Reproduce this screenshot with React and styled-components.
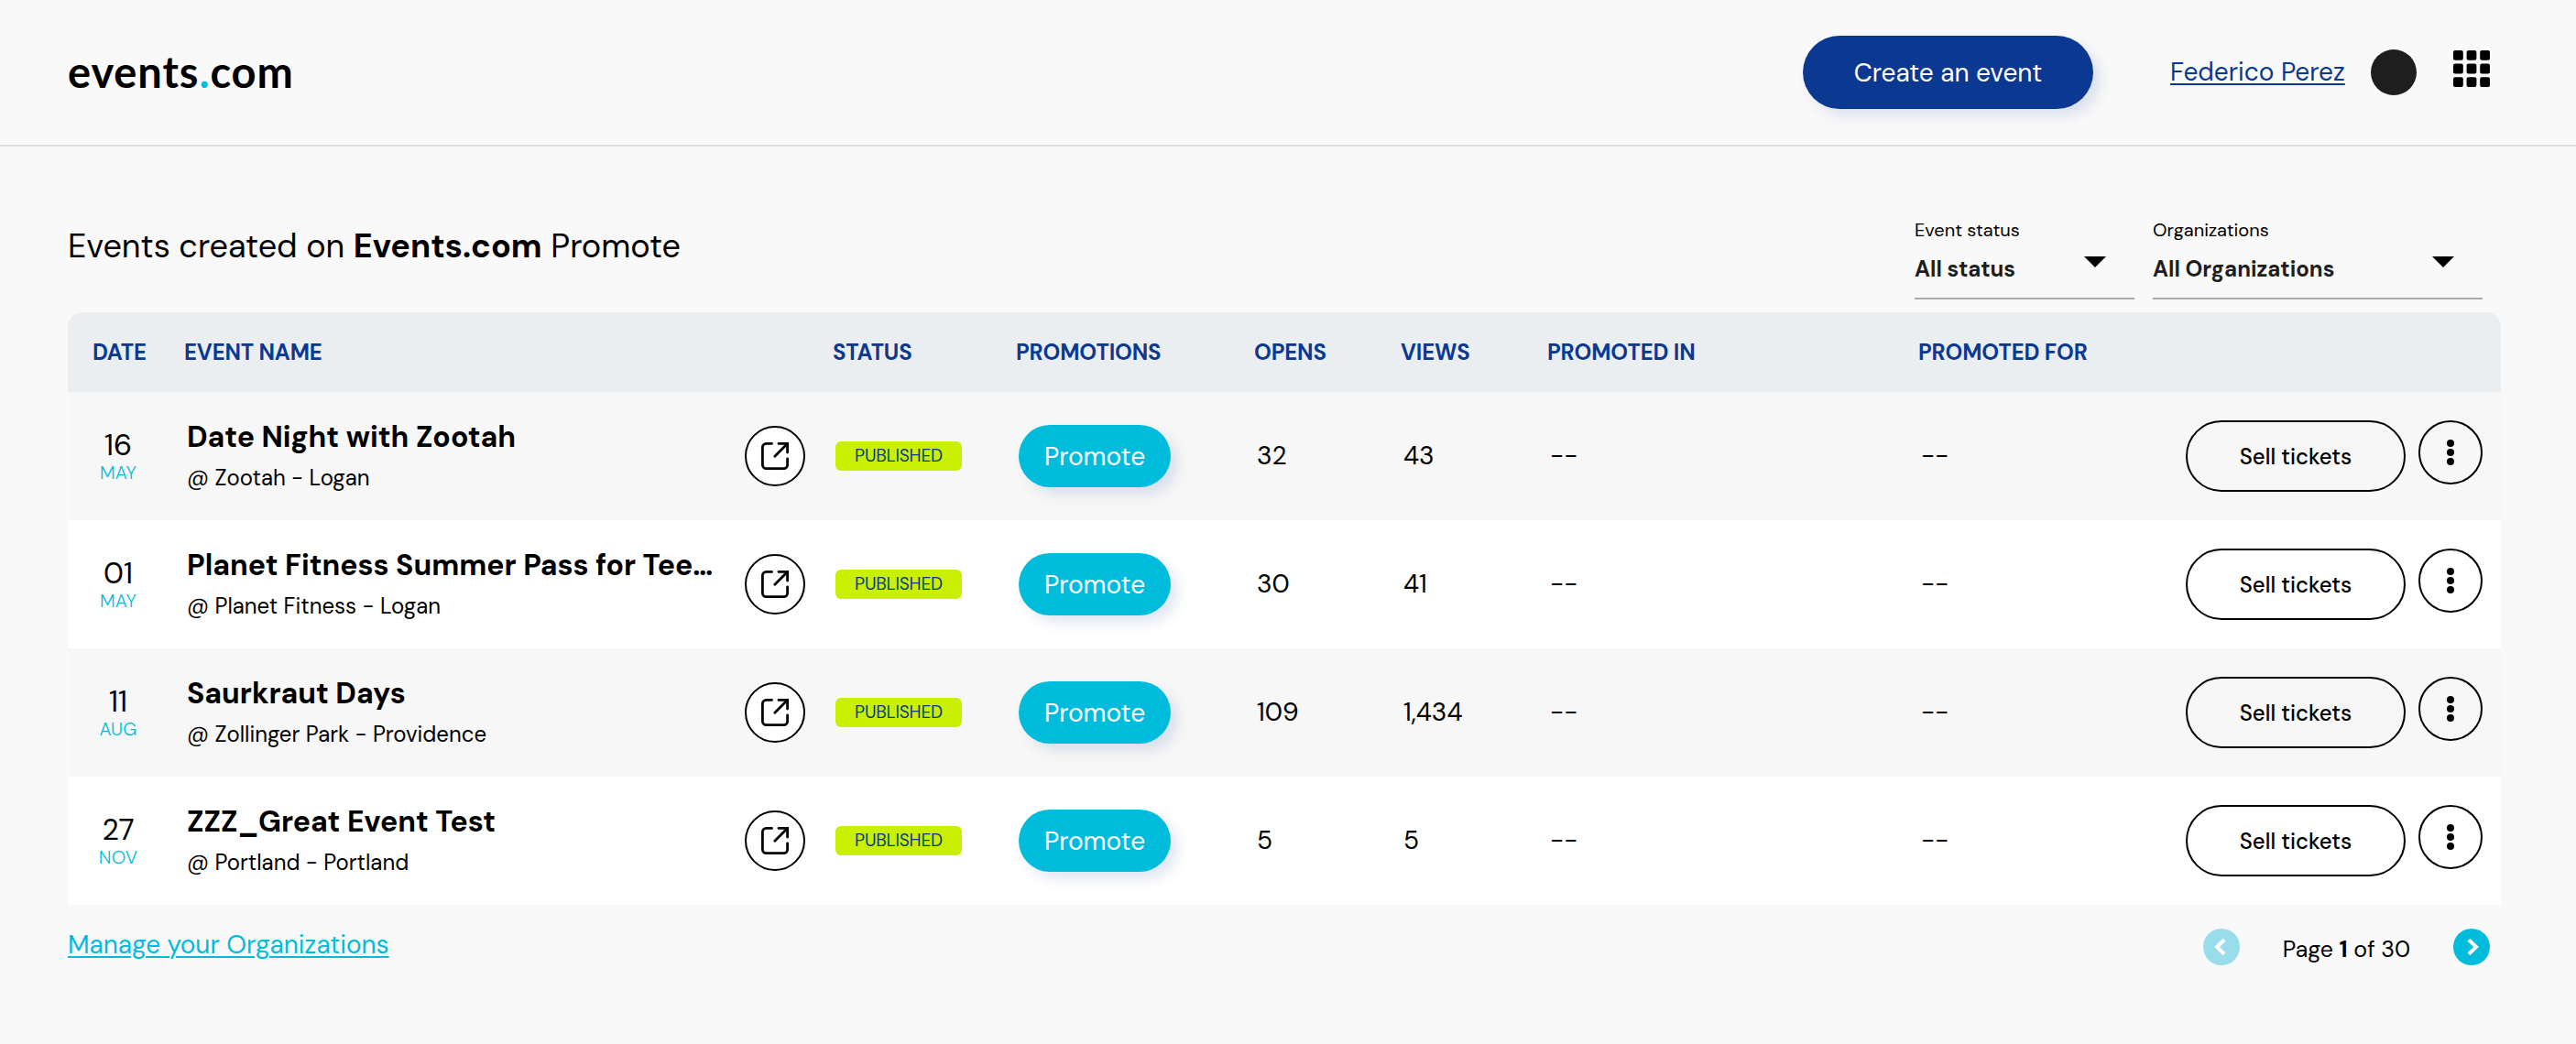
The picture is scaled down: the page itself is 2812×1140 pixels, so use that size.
import React from "react";
import styled, { createGlobalStyle } from "styled-components";

const events = [
  { id: 1, day: "16", month: "MAY", name: "Date Night with Zootah", place: "@ Zootah - Logan", opens: "32", views: "43" },
  { id: 2, day: "01", month: "MAY", name: "Planet Fitness Summer Pass for Tee…", place: "@ Planet Fitness - Logan", opens: "30", views: "41" },
  { id: 3, day: "11", month: "AUG", name: "Saurkraut Days", place: "@ Zollinger Park - Providence", opens: "109", views: "1,434" },
  { id: 4, day: "27", month: "NOV", name: "ZZZ_Great Event Test", place: "@ Portland - Portland", opens: "5", views: "5" },
];

function GridIcon() {
  const cells = [0, 14.6, 29.2];
  return (
    <svg width="40" height="40" viewBox="0 0 40 40">
      {cells.map((y) =>
        cells.map((x) => (
          <rect key={`${x}-${y}`} x={x} y={y} width="10.8" height="10.8" rx="2" fill="#000" />
        ))
      )}
    </svg>
  );
}

function OpenIcon() {
  return (
    <svg width="32" height="32" viewBox="0 0 32 32" fill="none" stroke="#000" strokeWidth="2.8" strokeLinecap="round">
      <path d="M12.5 2.4h-6a4.1 4.1 0 0 0-4.1 4.1v19a4.1 4.1 0 0 0 4.1 4.1h19a4.1 4.1 0 0 0 4.1-4.1V19" />
      <path d="M20 2.4h9.6V12" />
      <path d="M15.8 16.2 29 3" />
    </svg>
  );
}

function DotsIcon() {
  return (
    <svg width="8" height="28" viewBox="0 0 8 28">
      <circle cx="4" cy="4" r="4" />
      <circle cx="4" cy="14" r="4" />
      <circle cx="4" cy="24" r="4" />
    </svg>
  );
}

function Chevron({ left }) {
  return (
    <svg width="40" height="40" viewBox="0 0 40 40" fill="none" stroke="#fff" strokeWidth="4">
      <path d={left ? "M23 12.2 15 20l8 7.8" : "M17 12.2 25 20l-8 7.8"} />
    </svg>
  );
}

function Filter({ label, value, width }) {
  return (
    <FilterBox $width={width}>
      <FilterLabel>{label}</FilterLabel>
      <FilterValue>
        <span>{value}</span>
        <Arrow />
      </FilterValue>
    </FilterBox>
  );
}

function App() {
  return (
    <Page>
      <GlobalStyle />
      <Header>
        <Logo>
          events<span>.</span>com
        </Logo>
        <HeaderRight>
          <CreateButton>Create an event</CreateButton>
          <UserLink href="#">Federico Perez</UserLink>
          <Avatar />
          <AppsButton>
            <GridIcon />
          </AppsButton>
        </HeaderRight>
      </Header>
      <Content>
        <TopBar>
          <Title>
            Events created on <b>Events.com</b> Promote
          </Title>
          <Filters>
            <Filter label="Event status" value="All status" width={240} />
            <Filter label="Organizations" value="All Organizations" width={360} />
          </Filters>
        </TopBar>
        <TableHead>
          <span>DATE</span>
          <span>EVENT NAME</span>
          <span>STATUS</span>
          <span>PROMOTIONS</span>
          <span>OPENS</span>
          <span>VIEWS</span>
          <span>PROMOTED IN</span>
          <span>PROMOTED FOR</span>
        </TableHead>
        {events.map((event) => (
          <TableRow key={event.id}>
            <DateCell>
              <Day>{event.day}</Day>
              <Month>{event.month}</Month>
            </DateCell>
            <NameCell>
              <div>
                <EventName>{event.name}</EventName>
                <EventPlace>{event.place}</EventPlace>
              </div>
              <OpenButton>
                <OpenIcon />
              </OpenButton>
            </NameCell>
            <Cell>
              <Status>PUBLISHED</Status>
            </Cell>
            <Cell>
              <PromoteButton>Promote</PromoteButton>
            </Cell>
            <Cell>{event.opens}</Cell>
            <Cell>{event.views}</Cell>
            <Cell>--</Cell>
            <Cell>--</Cell>
            <Actions>
              <SellButton>Sell tickets</SellButton>
              <MoreButton>
                <DotsIcon />
              </MoreButton>
            </Actions>
          </TableRow>
        ))}
        <BottomBar>
          <ManageLink href="#">Manage your Organizations</ManageLink>
          <Pager>
            <PagerButton $disabled>
              <Chevron left />
            </PagerButton>
            <PagerText>
              Page <b>1</b> of 30
            </PagerText>
            <PagerButton>
              <Chevron />
            </PagerButton>
          </Pager>
        </BottomBar>
      </Content>
    </Page>
  );
}

export default App;

const GlobalStyle = createGlobalStyle`
  * {
    box-sizing: border-box;
  }
  body {
    margin: 0;
    background: #f9f9f9;
    color: #000;
    font-family: "DM Sans", Inter, "Liberation Sans", sans-serif;
  }
  button {
    padding: 0;
    border: none;
    background: none;
    font-family: inherit;
    color: inherit;
  }
  svg {
    display: block;
  }
`;

const Page = styled.div`
  min-height: 1140px;
`;

const Header = styled.header`
  display: flex;
  justify-content: space-between;
  align-items: center;
  height: 160px;
  padding: 0 94px 0 74px;
  border-bottom: 2px solid #dfdadc;
`;

const Logo = styled.div`
  font-family: Lato, "DM Sans", sans-serif;
  font-size: 47px;
  font-weight: 700;
  letter-spacing: 0.9px;
  line-height: 56px;
  margin-bottom: 3px;

  > span {
    color: #00bcdc;
  }
`;

const HeaderRight = styled.div`
  display: flex;
  align-items: center;
`;

const CreateButton = styled.button`
  width: 317px;
  height: 80px;
  border-radius: 40px;
  background: #0b3991;
  color: #fff;
  font-size: 28px;
  font-weight: 400;
  box-shadow: 8px 8px 14px rgba(11, 57, 145, 0.12);
`;

const UserLink = styled.a`
  width: 192px;
  margin-left: 84px;
  color: #0b3991;
  font-size: 28px;
  line-height: 34px;
  white-space: nowrap;
  text-underline-offset: 3px;
  text-decoration-thickness: 2px;
`;

const Avatar = styled.div`
  width: 50px;
  height: 50px;
  margin-left: 27px;
  border-radius: 50%;
  background: #1e1e1e;
`;

const AppsButton = styled.button`
  margin-left: 40px;
  margin-bottom: 8px;
`;

const Content = styled.main`
  width: 2656px;
  margin-left: 74px;
`;

const TopBar = styled.div`
  display: flex;
  justify-content: space-between;
  height: 181px;
  padding: 79px 20px 14px 0;
`;

const Title = styled.h1`
  margin: 10px 0 0;
  font-size: 36px;
  font-weight: 400;
  line-height: 40px;

  > b {
    font-weight: 700;
  }
`;

const Filters = styled.div`
  display: flex;
  gap: 20px;
`;

const FilterBox = styled.div`
  width: ${(props) => props.$width}px;
  height: 88px;
  border-bottom: 2px solid #ababab;
`;

const FilterLabel = styled.div`
  font-size: 20px;
  line-height: 25px;
`;

const FilterValue = styled.div`
  display: flex;
  justify-content: space-between;
  margin-top: 15px;
  padding-right: 31px;
  color: #1e1e1e;
  font-size: 24px;
  font-weight: 700;
  line-height: 30px;
`;

const Arrow = styled.i`
  margin-top: 1px;
  width: 0;
  height: 0;
  border-left: 12px solid transparent;
  border-right: 12px solid transparent;
  border-top: 12px solid #000;
`;

const GridRow = styled.div`
  display: grid;
  grid-template-columns: 100px 708px 200px 260px 160px 160px 405px 293px 1fr;
  align-items: center;
  padding: 0 20px 0 26px;
`;

const TableHead = styled(GridRow)`
  height: 87px;
  padding: 1px 19px 0 27px;
  border-radius: 16px 16px 0 0;
  background: #ebeef1;
  color: #0b3991;
  font-size: 24px;
  font-weight: 700;
  letter-spacing: -0.15px;
  line-height: 30px;
`;

const TableRow = styled(GridRow)`
  height: 140px;
  background: #fff;

  &:nth-child(odd) {
    background: #f7f7f7;
  }
`;

const DateCell = styled.div`
  width: 58px;
  text-align: center;
`;

const Day = styled.div`
  font-size: 32px;
  line-height: 36px;
`;

const Month = styled.div`
  color: #00bcdc;
  font-size: 20px;
  font-weight: 300;
  letter-spacing: 0.2px;
  line-height: 24px;
`;

const NameCell = styled.div`
  display: flex;
  justify-content: space-between;
  align-items: center;
  padding: 0 29px 0 4px;
`;

const EventName = styled.div`
  font-size: 32px;
  font-weight: 700;
  line-height: 48px;
  white-space: nowrap;
`;

const EventPlace = styled.div`
  font-size: 24px;
  line-height: 42px;
`;

const OpenButton = styled.button`
  display: flex;
  align-items: center;
  justify-content: center;
  flex-shrink: 0;
  width: 66px;
  height: 66px;
  border: 2px solid #000;
  border-radius: 50%;
  background: #fff;
`;

const Cell = styled.div`
  padding-left: 4px;
  font-size: 28px;
  line-height: 34px;
`;

const Status = styled.div`
  width: 138px;
  height: 32px;
  border-radius: 6px;
  background: #c8f000;
  color: #0b3991;
  font-size: 19px;
  letter-spacing: -0.15px;
  line-height: 32px;
  text-align: center;
`;

const PromoteButton = styled.button`
  width: 166px;
  height: 68px;
  border-radius: 34px;
  background: #00bcdc;
  color: #fff;
  font-size: 28px;
  box-shadow: 8px 8px 14px rgba(11, 57, 145, 0.12);
`;

const Actions = styled.div`
  display: flex;
  justify-content: flex-end;
  gap: 14px;
`;

const SellButton = styled.button`
  width: 240px;
  height: 78px;
  border: 2px solid #000;
  border-radius: 39px;
  font-size: 24px;
  font-weight: 500;
`;

const MoreButton = styled.button`
  display: flex;
  align-items: center;
  justify-content: center;
  width: 70px;
  height: 70px;
  border: 2px solid #000;
  border-radius: 50%;
`;

const BottomBar = styled.div`
  display: flex;
  justify-content: space-between;
  align-items: flex-start;
  padding: 26px 12px 0 0;
`;

const ManageLink = styled.a`
  color: #00bcdc;
  font-size: 28px;
  line-height: 36px;
  text-underline-offset: 3px;
  text-decoration-thickness: 2px;
`;

const Pager = styled.div`
  display: flex;
  align-items: center;
  justify-content: space-between;
  width: 313px;
`;

const PagerButton = styled.button`
  width: 40px;
  height: 40px;
  border-radius: 50%;
  background: ${(props) => (props.$disabled ? "#99dceb" : "#00bcdc")};
`;

const PagerText = styled.div`
  padding-top: 5px;
  font-size: 25px;
  line-height: 30px;
`;
